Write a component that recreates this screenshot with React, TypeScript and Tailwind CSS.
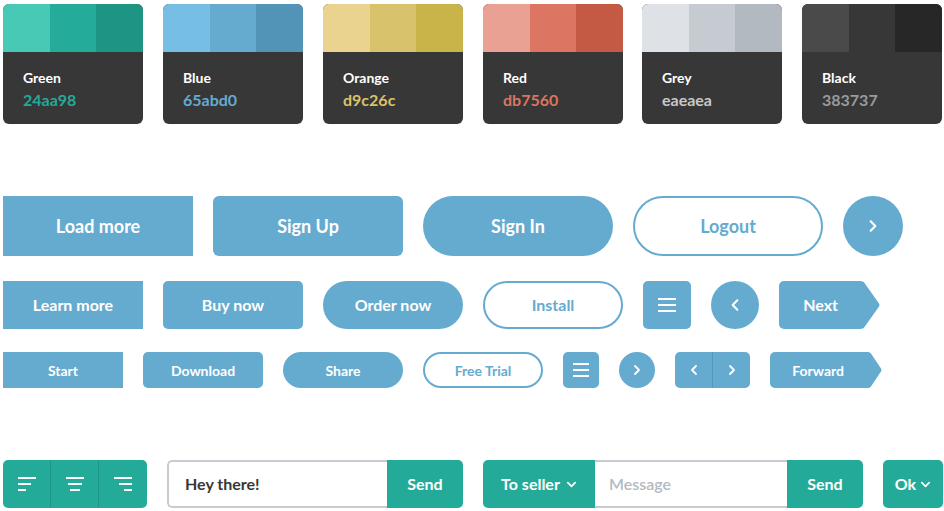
import type { ReactNode } from 'react';

const FONT = { fontFamily: 'Lato, "Open Sans", sans-serif' };

const SWATCHES = [
    { name: 'Green', code: '24aa98', codeColor: 'text-[#24aa98]', shades: ['bg-[#47c9b5]', 'bg-[#25ab99]', 'bg-[#1c9585]'] },
    { name: 'Blue', code: '65abd0', codeColor: 'text-[#65abd0]', shades: ['bg-[#77bee5]', 'bg-[#65abd0]', 'bg-[#5194b8]'] },
    { name: 'Orange', code: 'd9c26c', codeColor: 'text-[#d9c26c]', shades: ['bg-[#e9d38e]', 'bg-[#d9c26c]', 'bg-[#c9b44a]'] },
    { name: 'Red', code: 'db7560', codeColor: 'text-[#db7560]', shades: ['bg-[#e9a193]', 'bg-[#dc7662]', 'bg-[#c45a43]'] },
    { name: 'Grey', code: 'eaeaea', codeColor: 'text-[#c9c9c9]', shades: ['bg-[#dee1e6]', 'bg-[#c6cad1]', 'bg-[#b3b9c1]'] },
    { name: 'Black', code: '383737', codeColor: 'text-[#9a9a9a]', shades: ['bg-[#4a4a4a]', 'bg-[#383737]', 'bg-[#272727]'] },
];

function Chevron({ dir = 'right', size = 12, className = '' }: { dir?: 'left' | 'right' | 'down'; size?: number; className?: string }) {
    const d = dir === 'right' ? 'M4 2l4 4-4 4' : dir === 'left' ? 'M8 2L4 6l4 4' : 'M2 4l4 4 4-4';
    return (
        <svg width={size} height={size} viewBox="0 0 12 12" className={className} fill="none" stroke="currentColor" strokeWidth={1.8} strokeLinecap="round" strokeLinejoin="round">
            <path d={d} />
        </svg>
    );
}

function MenuIcon({ w = 18 }: { w?: number }) {
    return (
        <div className="flex flex-col gap-[4px]" style={{ width: w }}>
            <span className="h-[2px] bg-white" />
            <span className="h-[2px] bg-white" />
            <span className="h-[2px] bg-white" />
        </div>
    );
}

function AlignIcon({ align }: { align: 'left' | 'center' | 'right' }) {
    const pos = align === 'left' ? 'self-start' : align === 'center' ? 'self-center' : 'self-end';
    return (
        <div className="flex flex-col gap-[4px] w-[18px]">
            <span className="h-[2px] w-[18px] bg-white" />
            <span className={`h-[2px] ${align === 'center' ? 'w-[14px]' : 'w-[13px]'} bg-white ${pos}`} />
            <span className={`h-[2px] ${align === 'center' ? 'w-[10px]' : 'w-[8px]'} bg-white ${pos}`} />
        </div>
    );
}

// arrow-tipped button: rectangular body plus a triangle drawn on the right
function ArrowButton({ label, h, tip, width, text }: { label: string; h: number; tip: number; width: number; text: string }) {
    return (
        <div className="flex shrink-0" style={{ height: h }}>
            <div className={`flex items-center justify-end bg-[#65abd0] text-white font-bold rounded-l-[5px] ${text}`} style={{ width }}>
                {label}
            </div>
            <svg width={tip} height={h} viewBox={`0 0 ${tip} ${h}`}>
                <path d={`M0 0 H${tip * 0.25} Q${tip * 0.32} 0 ${tip * 0.4} 1 L${tip - 1} ${h / 2 - 1.5} Q${tip} ${h / 2} ${tip - 1} ${h / 2 + 1.5} L${tip * 0.4} ${h - 1} Q${tip * 0.32} ${h} ${tip * 0.25} ${h} H0 Z`} fill="#65abd0" />
            </svg>
        </div>
    );
}

function Blue({ children, className }: { children: ReactNode; className: string }) {
    return (
        <button className={`flex items-center justify-center shrink-0 bg-[#65abd0] text-white font-bold ${className}`}>
            {children}
        </button>
    );
}

export default function App() {
    return (
        <div className="w-[944px] h-[511px] bg-white pl-[3px] pt-[4px] overflow-hidden" style={FONT}>
            {/* Palette */}
            <div className="flex gap-5">
                {SWATCHES.map((s, i) => (
                    <div key={s.name} className={`w-[140px] h-[120px] rounded-[6px] overflow-hidden bg-[#383737] shrink-0 ${i === 4 ? '-ml-[1px]' : ''}`}>
                        <div className="flex h-12">
                            {s.shades.map(c => (
                                <div key={c} className={`flex-1 ${c}`} />
                            ))}
                        </div>
                        <div className="pl-5 pt-[16px]">
                            <p className="text-[14px] leading-[20px] font-bold text-white">{s.name}</p>
                            <p className={`text-[16px] leading-[22px] font-bold mt-[1px] ${s.codeColor}`}>{s.code}</p>
                        </div>
                    </div>
                ))}
            </div>

            {/* Large buttons */}
            <div className="flex items-center gap-5 mt-[72px] text-[18px]">
                <Blue className="w-[190px] h-[60px]">Load more</Blue>
                <Blue className="w-[190px] h-[60px] rounded-[6px]">Sign Up</Blue>
                <Blue className="w-[190px] h-[60px] rounded-full">Sign In</Blue>
                <button className="w-[190px] h-[60px] rounded-full border-2 border-[#65abd0] text-[#65abd0] font-bold shrink-0">Logout</button>
                <Blue className="w-[60px] h-[60px] rounded-full"><Chevron dir="right" size={14} /></Blue>
            </div>

            {/* Medium buttons */}
            <div className="flex items-center gap-5 mt-[25px] text-[16px]">
                <Blue className="w-[140px] h-12">Learn more</Blue>
                <Blue className="w-[140px] h-12 rounded-[5px]">Buy now</Blue>
                <Blue className="w-[140px] h-12 rounded-full">Order now</Blue>
                <button className="w-[140px] h-12 rounded-full border-2 border-[#65abd0] text-[#65abd0] font-bold shrink-0">Install</button>
                <Blue className="w-12 h-12 rounded-[5px]"><MenuIcon w={18} /></Blue>
                <Blue className="w-12 h-12 rounded-full"><Chevron dir="left" size={14} /></Blue>
                <ArrowButton label="Next" h={48} tip={27} width={74} text="text-[16px] pr-[15px]" />
            </div>

            {/* Small buttons */}
            <div className="flex items-center gap-5 mt-[23px] text-[14px]">
                <Blue className="w-[120px] h-9">Start</Blue>
                <Blue className="w-[120px] h-9 rounded-[5px]">Download</Blue>
                <Blue className="w-[120px] h-9 rounded-full">Share</Blue>
                <button className="w-[120px] h-9 rounded-full border-2 border-[#65abd0] text-[#65abd0] font-bold shrink-0">Free Trial</button>
                <Blue className="w-9 h-9 rounded-[5px]"><MenuIcon w={16} /></Blue>
                <Blue className="w-9 h-9 rounded-full"><Chevron dir="right" size={12} /></Blue>
                <div className="flex h-9 rounded-[5px] overflow-hidden shrink-0">
                    <Blue className="w-[38px] h-9 border-r border-[#5597bb]"><Chevron dir="left" size={12} /></Blue>
                    <Blue className="w-[37px] h-9"><Chevron dir="right" size={12} /></Blue>
                </div>
                <ArrowButton label="Forward" h={36} tip={19} width={93} text="text-[14px] pr-[19px]" />
            </div>

            {/* Form controls */}
            <div className="flex items-center gap-5 mt-[72px] text-[16px]">
                <div className="flex h-12 rounded-[5px] overflow-hidden bg-[#24aa98] shrink-0">
                    {(['left', 'center', 'right'] as const).map((a, i) => (
                        <div key={a} className={`w-12 h-12 flex items-center justify-center ${i < 2 ? 'border-r border-[#1f9787]' : ''}`}>
                            <AlignIcon align={a} />
                        </div>
                    ))}
                </div>

                <div className="flex h-12 w-[296px] rounded-[5px] overflow-hidden shrink-0">
                    <div className="flex-1 flex items-center pl-[16px] border-2 border-r-0 border-[#c6cad1] rounded-l-[5px] text-[#383737] font-bold">
                        Hey there!
                    </div>
                    <div className="w-[76px] flex items-center justify-center bg-[#24aa98] text-white font-bold">Send</div>
                </div>

                <div className="flex h-12 w-[380px] rounded-[5px] overflow-hidden shrink-0">
                    <div className="w-[112px] flex items-center justify-center gap-[6px] bg-[#24aa98] text-white font-bold">
                        To seller <Chevron dir="down" size={11} />
                    </div>
                    <div className="flex-1 flex items-center pl-[14px] border-y-2 border-[#c6cad1] text-[#b3b9c1] font-semibold">
                        Message
                    </div>
                    <div className="w-[76px] flex items-center justify-center bg-[#24aa98] text-white font-bold">Send</div>
                </div>

                <div className="w-[60px] h-12 rounded-[5px] bg-[#24aa98] flex items-center justify-center gap-[4px] text-white font-bold shrink-0">
                    Ok <Chevron dir="down" size={11} />
                </div>
            </div>
        </div>
    );
}
